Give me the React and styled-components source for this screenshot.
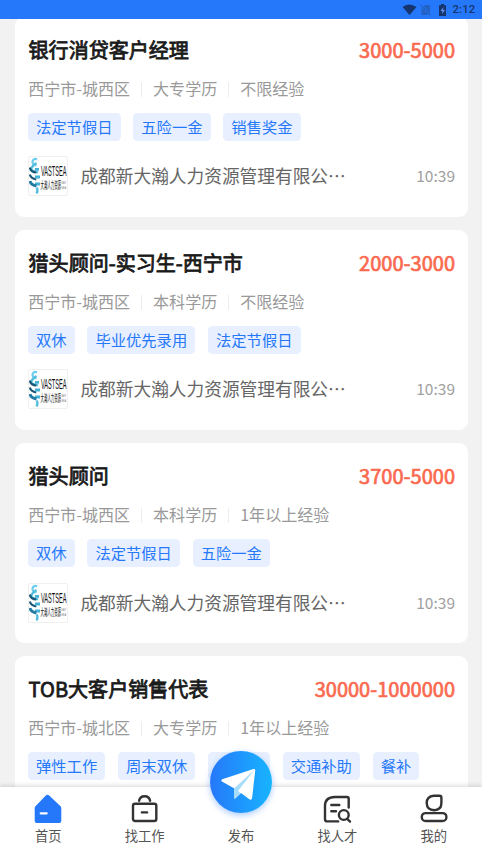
import React from "react";
import styled, { createGlobalStyle } from "styled-components";

const GlobalStyle = createGlobalStyle`
  * { box-sizing: border-box; }
  body {
    margin: 0;
    background: #f2f2f2;
    font-family: "Noto Sans CJK SC", "Noto Sans", sans-serif;
  }
`;

const Screen = styled.div`
  display: flex;
  flex-direction: column;
  width: 482px;
  height: 858px;
  overflow: hidden;
  background: #f2f2f2;
`;

const StatusBar = styled.header`
  display: flex;
  flex: none;
  align-items: center;
  justify-content: flex-end;
  height: 19px;
  padding-right: 6.5px;
  background: #2678fa;
  color: #16356f;
  z-index: 1;
`;

const Clock = styled.span`
  margin-left: 3px;
  font: 500 11.3px/20px Roboto, sans-serif;
  letter-spacing: 0.2px;
`;

const List = styled.main`
  display: flex;
  flex: 1;
  flex-direction: column;
  gap: 13.2px;
  min-height: 0;
  padding: 0 14.5px 0 15px;
  overflow: hidden;
`;

const Card = styled.article`
  flex: none;
  height: 200px;
  padding: 17px 12.5px 0 13.3px;
  border-radius: 9px;
  background: #fff;

  &:first-child { margin-top: -2.3px; }
`;

const CardHead = styled.div`
  display: flex;
  justify-content: space-between;
  height: 32px;
  font-size: 20.05px;
  line-height: 32px;
`;

const Title = styled.h2`
  margin: 0 0 0 0.3px;
  font-size: inherit;
  font-weight: 400;
  color: #1a1a1a;
  -webkit-text-stroke: 0.8px #1a1a1a;
`;

const Salary = styled.span`
  color: #fa6a50;
  -webkit-text-stroke: 0.7px #fa6a50;
`;

const Meta = styled.div`
  display: flex;
  align-items: center;
  height: 24px;
  margin-top: 10px;
  color: #999;
  font-size: 16.05px;
  line-height: 24px;

  span + span {
    display: flex;
    align-items: center;
  }
  span + span::before {
    content: "";
    width: 1px;
    height: 15px;
    margin: 3px 11px 0;
    background: #ededed;
  }
`;

const Tags = styled.div`
  display: flex;
  gap: 12.8px;
  margin: 13px 0 0 -0.3px;
`;

const Tag = styled.span`
  flex: none;
  height: 28px;
  padding: 0 8px;
  border-radius: 4.5px;
  background: #e8f0ff;
  color: #2678fa;
  font-size: 15.3px;
  line-height: 27px;
`;

const Company = styled.div`
  display: flex;
  align-items: center;
  height: 40px;
  margin-top: 15.6px;
`;

const LogoFrame = styled.div`
  flex: none;
  width: 40px;
  height: 40px;
  border: 1px solid #f0f0f0;
  border-radius: 2px;

  svg { display: block; }
`;

const CompanyName = styled.span`
  flex: 1;
  margin-left: 12.1px;
  color: #666;
  font-size: 17.7px;
  line-height: 38px;
  height: 40px;
  white-space: nowrap;
`;

const Time = styled.time`
  height: 40px;
  color: #a0a0a0;
  font-size: 15.5px;
  line-height: 39px;
`;

const TabBar = styled.nav`
  display: grid;
  flex: none;
  grid-template-columns: repeat(5, 1fr);
  height: 71px;
  background: #fff;
  box-shadow: 0 -1px 5px rgba(0, 0, 0, 0.16);
  z-index: 1;
`;

const Tab = styled.div`
  display: flex;
  flex-direction: column;
  align-items: center;
  padding-top: 7px;
  color: #555;
  font-size: 13.3px;
  line-height: 20px;

  svg { display: block; flex: none; }
`;

const TabLabel = styled.span`
  margin-top: 2px;
`;

const Publish = styled.div`
  flex: none;
  width: 62px;
  height: 62px;
  margin: -43px 0 11px;
  border-radius: 50%;
  background: linear-gradient(90deg, #2678fa, #17b4ff);
  box-shadow: 0 2px 6px rgba(38, 120, 250, 0.4);
`;

function StatusIcons() {
  return (
    <svg width="46" height="14" viewBox="0 0 46 14">
      <path d="M-.5 4 Q6.5 -1 13.5 4 L6.5 12Z" fill="#16356f" />
      <path d="M18.5 5.5 22 2h5v10h-8.5z" fill="#2461c4" />
      <path d="m17.5 1.5 10 11" stroke="#2678fa" strokeWidth="2.2" />
      <path d="m18 2.3 9.5 10" stroke="#1d4f9f" strokeWidth="1" />
      <path d="M36 2.3h2V1h3v1.3h2V13h-7z" fill="#16356f" />
      <path d="m40.5 4-3 4h2l-.5 3 3-4h-2z" fill="#6195ee" />
    </svg>
  );
}

function CompanyLogo() {
  return (
    <svg width="38" height="38" viewBox="0 0 38 38">
      <g fill="none" strokeWidth="2.2">
        <path d="M8 2.5Q5 .5 3.5 4.5q0 3.5 4 4" stroke="#6dcdee" />
        <path d="M7.5 6q-5 3-5.5 7l7 2.5" stroke="#52bddd" />
        <path d="M.8 10.5q1 4.5 6.5 5M.8 17.5q1 4 6.5 5" stroke="#1c5676" />
        <path d="M6 12.3h4M6 20h5M6 27h5" stroke="#45b2d5" strokeWidth="2.8" />
        <path d="M1 24q1 4 6.5 5" stroke="#247ba3" strokeWidth="3" />
        <path d="M7.5 36.5q2-3 .2-6" stroke="#52bddd" />
      </g>
      <g fill="#111" fontFamily="Liberation Sans, sans-serif">
        <text transform="translate(12 18.5) scale(.59 1.6)" fontSize="9.5">VASTSEA</text>
        <text transform="translate(11.6 31.5) scale(.41 1.2)" fontSize="8.3" fontFamily="Noto Sans CJK SC, sans-serif">大瀚人力资源</text>
        <text transform="translate(32.2 27) scale(.5 1)" fontSize="4" fill="#777">VAST</text>
        <text transform="translate(32.2 32) scale(.6 1)" fontSize="4" fill="#777">SEA</text>
      </g>
    </svg>
  );
}

const stroke = { fill: "none", stroke: "#333", strokeWidth: 2.4, strokeLinecap: "round", strokeLinejoin: "round" };

function HomeIcon() {
  return (
    <svg width="30" height="30" viewBox="0 0 30 30">
      <path d="M12.8 1.4q1.7-1.2 3.4 0L27.3 12q1 .9 1 2v13q0 2-2 2H3.7q-2 0-2-2V14q0-1.1 1-2z" fill="#2678fa" />
      <path d="M7.7 19.3h6" stroke="#fff" strokeWidth="2.2" strokeLinecap="round" />
    </svg>
  );
}

function JobIcon() {
  return (
    <svg width="30" height="30" viewBox="0 0 30 30" {...stroke}>
      <rect x="3" y="9.7" width="23.3" height="17.3" rx="2" />
      <path d="M9.1 6.8q.7-4.6 5.5-4.6t5.5 4.6M11.9 18.4h5.2" />
    </svg>
  );
}

function TalentIcon() {
  return (
    <svg width="30" height="30" viewBox="0 0 30 30" {...stroke}>
      <path d="M26.7 13.5V4.8q0-1.8-1.8-1.8H13Q3 3 3 12v13.2q0 2.2 2.2 2.2h11M9.3 11h8M9.3 17.2h4.7" />
      <circle cx="21.8" cy="21" r="4.9" />
      <path d="m25.4 25 2.6 2.6" />
    </svg>
  );
}

function ProfileIcon() {
  return (
    <svg width="30" height="30" viewBox="0 0 30 30" {...stroke}>
      <path d="M14.9 1.8h5.6q1.9 0 1.9 1.9V9q0 6.9-7.2 7.2Q7.9 16 7.7 9q.1-6.5 7.2-7.2Z" />
      <rect x="2.8" y="19.1" width="24.6" height="7.9" rx="3.8" />
    </svg>
  );
}

function PaperPlane() {
  return (
    <svg width="62" height="62" viewBox="0 0 62 62">
      <path d="M12.2 28.2 43.5 18.1q2-.5 1.7 1.6L42.1 47q-.3 2.6-2.8 1.3L31 42l-5.5 5.2q-1.5 1.2-1.5-1V37.3L12.4 30.7q-2-1.2-.2-2.5Z" fill="#fff" />
      <path d="m44.8 18.5-20.8 19v8.6q0 2 1.5 1L30.2 42l-2-2.2z" fill="#a8dcfb" />
    </svg>
  );
}

const company = "成都新大瀚人力资源管理有限公⋯";
const jobs = [
  { title: "银行消贷客户经理", salary: "3000-5000", meta: ["西宁市-城西区", "大专学历", "不限经验"], tags: ["法定节假日", "五险一金", "销售奖金"] },
  { title: "猎头顾问-实习生-西宁市", salary: "2000-3000", meta: ["西宁市-城西区", "本科学历", "不限经验"], tags: ["双休", "毕业优先录用", "法定节假日"] },
  { title: "猎头顾问", salary: "3700-5000", meta: ["西宁市-城西区", "本科学历", "1年以上经验"], tags: ["双休", "法定节假日", "五险一金"] },
  { title: "TOB大客户销售代表", salary: "30000-1000000", meta: ["西宁市-城北区", "大专学历", "1年以上经验"], tags: ["弹性工作", "周末双休", "全勤奖", "交通补助", "餐补"] },
];

const tabs = [
  { label: "首页", icon: <HomeIcon /> },
  { label: "找工作", icon: <JobIcon /> },
  { label: "发布", icon: <Publish><PaperPlane /></Publish> },
  { label: "找人才", icon: <TalentIcon /> },
  { label: "我的", icon: <ProfileIcon /> },
];

function JobCard({ job }) {
  return (
    <Card>
      <CardHead>
        <Title>{job.title}</Title>
        <Salary>{job.salary}</Salary>
      </CardHead>
      <Meta>{job.meta.map((m) => <span key={m}>{m}</span>)}</Meta>
      <Tags>{job.tags.map((t) => <Tag key={t}>{t}</Tag>)}</Tags>
      <Company>
        <LogoFrame><CompanyLogo /></LogoFrame>
        <CompanyName>{company}</CompanyName>
        <Time>10:39</Time>
      </Company>
    </Card>
  );
}

export default function App() {
  return (
    <>
      <GlobalStyle />
      <Screen>
        <StatusBar>
          <StatusIcons />
          <Clock>2:12</Clock>
        </StatusBar>
        <List>{jobs.map((job) => <JobCard key={job.title} job={job} />)}</List>
        <TabBar>
          {tabs.map((tab) => (
            <Tab key={tab.label}>
              {tab.icon}
              <TabLabel>{tab.label}</TabLabel>
            </Tab>
          ))}
        </TabBar>
      </Screen>
    </>
  );
}
